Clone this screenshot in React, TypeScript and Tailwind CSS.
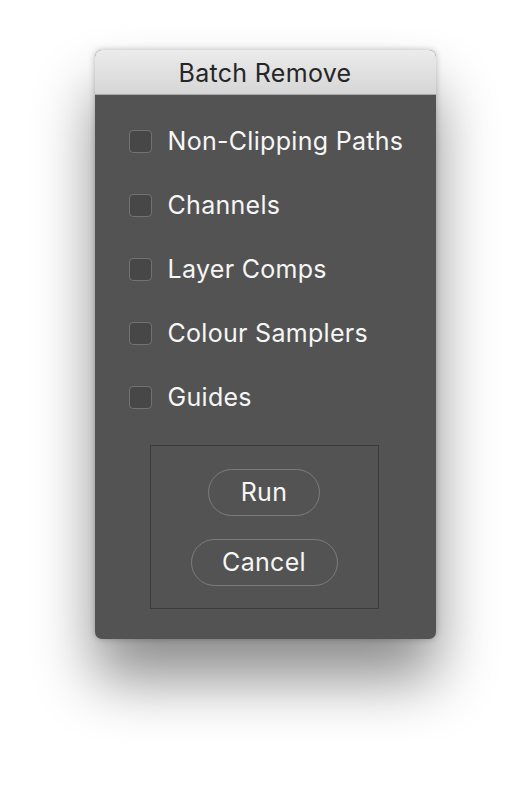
import React from 'react';

const items = ['Non-Clipping Paths', 'Channels', 'Layer Comps', 'Colour Samplers', 'Guides'];

const App = () => {
  return (
    <div className="min-h-screen bg-white flex justify-center pt-[50px] font-['Inter','Liberation_Sans',sans-serif]">
      <div className="w-[341px] h-[589px] rounded-[7px] overflow-hidden flex flex-col bg-[#535353] shadow-[0_40px_60px_rgba(0,0,0,0.45),0_0_6px_rgba(0,0,0,0.25)]">
        {/* Title bar */}
        <div className="h-[45px] shrink-0 flex items-center justify-center bg-gradient-to-b from-[#ececec] to-[#d6d6d6] border-b border-[#a9a9a9]">
          <span className="text-[25px] tracking-[0.3px] text-[#262626] leading-none mt-[3px]">Batch Remove</span>
        </div>

        {/* Options */}
        <div className="flex flex-col pt-[14px] pl-[34px]">
          {items.map((item) => (
            <label key={item} className="flex items-center h-[64px] gap-[16px] cursor-pointer">
              <span className="w-[23px] h-[23px] rounded-[4px] border-[1.5px] border-[#727272] bg-[#474747]" />
              <span className="text-[25px] tracking-[0.3px] text-[#f6f6f6] leading-none">{item}</span>
            </label>
          ))}
        </div>

        {/* Button panel */}
        <div className="ml-[55px] mt-[16px] w-[229px] h-[164px] border border-[#3b3b3b] flex flex-col items-center pt-[23px] gap-[23px]">
          <button className="w-[112px] h-[47px] rounded-full border-[1.5px] border-[#7c7c7c] text-[25px] tracking-[0.3px] text-[#f6f6f6] leading-none">
            Run
          </button>
          <button className="w-[147px] h-[47px] rounded-full border-[1.5px] border-[#7c7c7c] text-[25px] tracking-[0.3px] text-[#f6f6f6] leading-none">
            Cancel
          </button>
        </div>
      </div>
    </div>
  );
};

export default App;
